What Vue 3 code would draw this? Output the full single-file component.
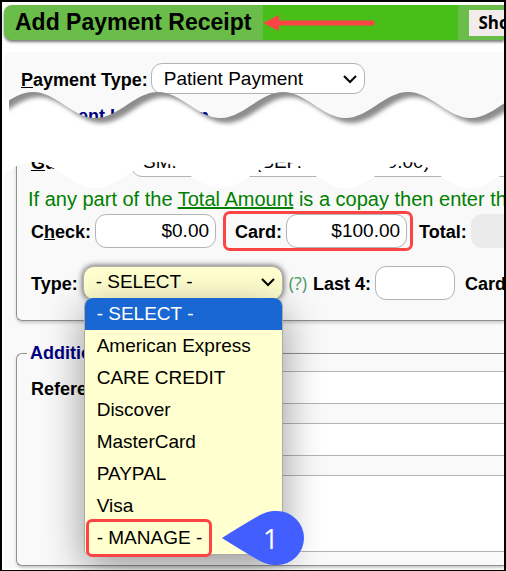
<script setup>
import { computed, ref } from 'vue'

const cardType = ref('- SELECT -')
const cardTypes = [
  '- SELECT -',
  'American Express',
  'CARE CREDIT',
  'Discover',
  'MasterCard',
  'PAYPAL',
  'Visa',
  '- MANAGE -'
]

const paymentType = ref('Patient Payment')
const guarantor = ref('SMITH, ADA (SEP. Balance: 0.00)')
const check = ref('$0.00')
const card = ref('$100.00')

const period = 125 // wave length of the torn edge
const count = 20

// one wave = half a period down, half a period up
const wave = (top, depth) => {
  const half = period / 2
  const c = 23
  let d = `M${29 - period},${top}`
  for (let i = 0; i < count; i++) {
    d += ` c${c},0 ${half - c},${depth} ${half},${depth}`
    d += ` c${c},0 ${half - c},${-depth} ${half},${-depth}`
  }
  return d
}

const upperEdge = computed(() => `${wave(2, 26)} V-40 H-96 Z`)
const lowerEdge = computed(() => `${wave(72, 26)} V140 H-96 Z`)
</script>

<template>
  <div class="page">
    <header class="title-bar">
      <h1>Add Payment Receipt</h1>
      <div class="title-fill">
        <svg class="arrow" viewBox="0 0 112 16" aria-hidden="true">
          <path d="M14 8 H109" stroke="#fd4444" stroke-width="5" stroke-linecap="round" />
          <path d="M0 8 L16 0 V16 Z" fill="#fd4444" />
        </svg>
      </div>
      <button type="button" class="show-btn">Show</button>
    </header>

    <form class="panel" @submit.prevent>
      <div class="row type-row">
        <label for="ptype"><u>P</u>ayment Type:</label>
        <div class="select-box">
          <select id="ptype" v-model="paymentType" class="field">
            <option>Patient Payment</option>
          </select>
          <svg class="chevron" viewBox="0 0 14 9"><path d="M1 1 L7 7 L13 1" /></svg>
        </div>
      </div>

      <fieldset class="payment">
        <legend>Payment Information</legend>
        <div class="row guarantor-row">
          <label for="guarantor" class="side-label"><u>G</u>uarantor:</label>
          <input id="guarantor" v-model="guarantor" class="field guarantor" />
        </div>
        <p class="hint">If any part of the <a href="#">Total Amount</a> is a copay then enter that</p>
        <div class="row">
          <label for="check">C<u>h</u>eck:</label>
          <input id="check" v-model="check" class="field amount" />
          <div class="marked">
            <label for="card">Card:</label>
            <input id="card" v-model="card" class="field amount" />
          </div>
          <label for="total">Total:</label>
          <input id="total" class="field amount total" disabled />
        </div>
        <div class="row card-row">
          <label for="ctype">Type:</label>
          <div class="select-box">
            <select id="ctype" v-model="cardType" class="field active">
              <option v-for="t in cardTypes" :key="t">{{ t }}</option>
            </select>
            <svg class="chevron" viewBox="0 0 14 9"><path d="M1 1 L7 7 L13 1" /></svg>
            <ul class="menu" role="listbox">
              <li
                v-for="t in cardTypes"
                :key="t"
                role="option"
                :aria-selected="t === cardType"
                :class="{ selected: t === cardType, manage: t === '- MANAGE -' }"
                @click="cardType = t"
              >
                {{ t }}
              </li>
            </ul>
            <div class="callout">
              <svg viewBox="0 0 82 54" aria-hidden="true">
                <path d="M0 27 C14 18 26 11 38 4 C46 0 50 0 55 0 A27 27 0 0 1 55 54 C50 54 46 54 38 50 C26 43 14 36 0 27 Z" fill="#425eff" />
              </svg>
              <span>1</span>
            </div>
          </div>
          <a href="#" class="help">(?)</a>
          <label for="last4">Last 4:</label>
          <input id="last4" class="field last4" />
          <span class="card-label">Card</span>
        </div>
      </fieldset>

      <fieldset class="additional">
        <legend>Additional</legend>
        <div class="row ref-row">
          <label for="reference" class="side-label">Reference:</label>
          <input id="reference" class="field wide" />
        </div>
        <div class="row ref-row">
          <span class="side-label"></span>
          <input class="field wide" aria-label="Description" />
        </div>
        <div class="row ref-row">
          <span class="side-label"></span>
          <textarea class="field wide notes" aria-label="Notes"></textarea>
        </div>
      </fieldset>

      <!-- torn strip that hides the skipped part of the form -->
      <svg class="tear" aria-hidden="true">
        <defs>
          <filter id="soft" x="-10%" y="-50%" width="120%" height="200%">
            <feGaussianBlur stdDeviation="2" />
          </filter>
        </defs>
        <mask id="strip">
          <rect width="100%" height="100%" fill="#fff" />
          <path :d="upperEdge" fill="#000" />
          <path :d="lowerEdge" fill="#000" />
        </mask>
        <g mask="url(#strip)">
          <rect width="100%" height="100%" fill="#fff" />
          <svg x="5" y="0" width="100%" height="60">
            <path :d="upperEdge" fill="#8c8c8c" transform="translate(1 5)" filter="url(#soft)" />
          </svg>
        </g>
      </svg>
    </form>
  </div>
</template>

<style>
body {
  margin: 0;
}
</style>

<style scoped>
.page {
  box-sizing: border-box;
  min-height: 100vh;
  padding: 3px 0 2px 2px;
  border: 2px solid #000;
  background: #fff;
  color: #000;
  font-family: "Liberation Sans", Arial, sans-serif;
  font-size: 18px;
  line-height: 20px;
  overflow: hidden;
}

.title-bar {
  display: flex;
  align-items: center;
  height: 35px;
  padding-left: 11px;
  border-radius: 8px 0 0 8px;
  background: #69bd48;
  box-shadow: 0 2px 3px #777;
}

h1 {
  flex: none;
  margin: 0;
  font-size: 23px;
  line-height: 35px;
}

.title-fill {
  display: flex;
  align-items: center;
  flex: none;
  width: 195px;
  height: 35px;
  margin-left: 12px;
  background: #47bf18;
}

.arrow {
  width: 112px;
  height: 16px;
}

.show-btn {
  flex: none;
  height: 26px;
  margin-left: 11px;
  padding: 0 9px;
  border: 0;
  background: #f3ecec;
  color: #000;
  font: bold 17px "Open Sans", "Noto Sans", sans-serif;
}

.panel {
  position: relative;
  margin-top: 12px;
  padding: 11px 0 2px 12px;
  border-radius: 8px 0 0 0;
  background: #f9f9f9;
}

.row {
  display: flex;
  align-items: center;
  white-space: nowrap;
}

label,
.card-label {
  flex: none;
  padding-top: 2px;
  font-weight: bold;
}

.field {
  flex: none;
  box-sizing: border-box;
  height: 34px;
  margin: 0;
  padding: 0 6px;
  border: 1px solid #b4b4b4;
  border-radius: 11px;
  background: #fff;
  color: #000;
  font: 19px "Liberation Sans", Arial, sans-serif;
  outline: none;
}

.select-box {
  position: relative;
  flex: none;
}

.select-box select {
  display: block;
  padding-left: 12px;
  appearance: none;
}

.chevron {
  position: absolute;
  top: 12px;
  right: 8px;
  width: 14px;
  height: 9px;
  fill: none;
  stroke: #000;
  stroke-width: 2;
  pointer-events: none;
}

.type-row {
  gap: 3px;
  padding-left: 5px;
}

#ptype {
  width: 214px;
  height: 31px;
}

fieldset {
  min-width: 0;
  margin: 0;
  padding: 0 0 0 10px;
  border: 1px solid #8f8f8f;
  border-right: 0;
  border-radius: 6px 0 0 6px;
  box-shadow: 0 2px 3px #ccc;
}

legend {
  padding: 0 3px;
  color: #000080;
  font-weight: bold;
}

.payment {
  margin-top: 12px;
  padding-bottom: 20px;
  border-top: 0;
}

.payment .row {
  padding-left: 4px;
}

.payment .guarantor-row {
  margin-top: 17px;
}

.guarantor-row label {
  padding-top: 5px;
}

.side-label {
  flex: none;
  width: 100px;
}

.guarantor {
  width: 480px;
  padding-top: 4px;
  padding-left: 11px;
}

.hint {
  margin: 0;
  padding: 10px 0 3px 1px;
  color: #008000;
  font-size: 20px;
  line-height: 24px;
  white-space: nowrap;
}

.hint a {
  color: #008000;
}

.amount {
  width: 121px;
  margin-left: 4px;
  text-align: right;
}

.marked {
  display: flex;
  align-items: center;
  margin: 0 9px 0 10px;
  padding: 0 3px 0 9px;
  border-radius: 4px;
  outline: 3px solid #fd4444;
}

.total {
  border-color: #ebebeb;
  background: #ebebeb;
}

.card-row {
  margin-top: 18px;
}

.card-row .select-box {
  margin-left: 5px;
}

.select-box .active {
  width: 200px;
  padding-bottom: 4px;
  background: #ffffcf;
  box-shadow: 0 0 6px #444;
}

.help {
  margin: 0 6px;
  color: #4d9b6a;
  font: 18px/20px "Open Sans", "Noto Sans", sans-serif;
  text-decoration: none;
}

.last4 {
  width: 80px;
  margin-left: 4px;
}

.card-label {
  margin-left: 10px;
}

.menu {
  position: absolute;
  z-index: 2;
  top: 32px;
  left: 1px;
  box-sizing: border-box;
  width: 199px;
  margin: 0;
  padding: 0;
  border: 1px solid #aaa;
  border-top: 0;
  border-radius: 8px 8px 5px 5px;
  background: #ffffcf;
  box-shadow: 0 12px 40px rgba(0, 0, 0, 0.4);
  font-size: 19px;
  line-height: 32px;
  list-style: none;
}

.menu li {
  padding-left: 12px;
}

.menu .selected {
  border-radius: 8px 8px 0 0;
  background: #1967d2;
  color: #fff;
}

.menu .manage {
  width: 112px;
  margin-left: 4px;
  padding-left: 8px;
  border-radius: 3px;
  outline: 3px solid #fd4444;
}

.callout {
  position: absolute;
  z-index: 3;
  top: 245px;
  left: 139px;
  width: 82px;
  height: 54px;
}

.callout svg {
  display: block;
  width: 82px;
  height: 54px;
}

.callout span {
  position: absolute;
  inset: 0 0 0 16px;
  color: #fff;
  font: 28px/54px "Open Sans", "Noto Sans", sans-serif;
  text-align: center;
}

.additional {
  margin-top: 22px;
}

.additional .ref-row {
  padding-left: 4px;
  margin-bottom: 19px;
}

.additional legend + .ref-row {
  margin-top: 8px;
}

.additional .ref-row:last-child {
  margin-bottom: 13px;
}

.wide {
  flex: 1;
  height: 33px;
  border-right: 0;
  border-radius: 11px 0 0 11px;
}

.notes {
  height: 77px;
  resize: none;
}

.tear {
  position: absolute;
  z-index: 1;
  top: 38px;
  left: 0;
  width: 100%;
  height: 100px;
}
</style>
